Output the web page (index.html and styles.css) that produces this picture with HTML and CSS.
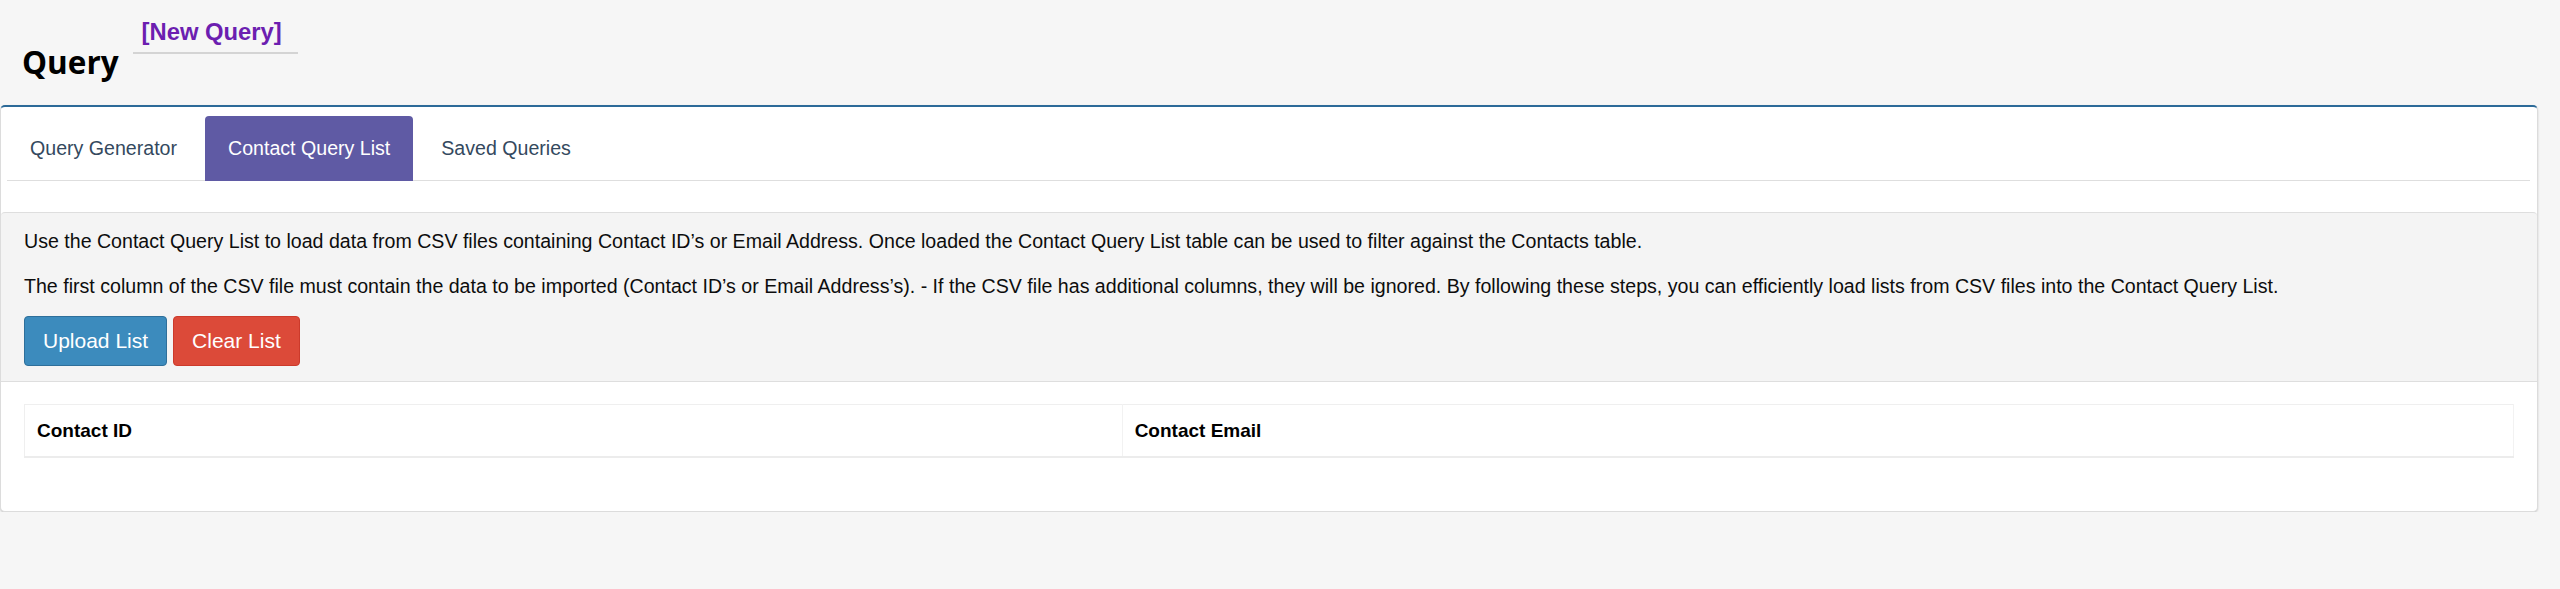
FILE: index.html
```html
<!DOCTYPE html>
<html>
<head>
    <meta charset="utf-8">
    <title>Query</title>
    <link rel="stylesheet" href="styles.css">
</head>
<body>
    <div class="page-header">
        <h1>Query</h1>
        <a href="#" class="new-query">[New Query]</a>
    </div>

    <div class="box">
        <div class="tab-strip">
            <ul class="tabs">
                <li class="tab">Query Generator</li>
                <li class="tab active">Contact Query List</li>
                <li class="tab">Saved Queries</li>
            </ul>
        </div>

        <div class="info">
            <p>Use the Contact Query List to load data from CSV files containing Contact ID’s or Email Address. Once loaded the Contact Query List table can be used to filter against the Contacts table.</p>
            <p>The first column of the CSV file must contain the data to be imported (Contact ID’s or Email Address’s). - If the CSV file has additional columns, they will be ignored. By following these steps, you can efficiently load lists from CSV files into the Contact Query List.</p>
            <div class="actions">
                <button class="btn btn-upload">Upload List</button>
                <button class="btn btn-clear">Clear List</button>
            </div>
        </div>

        <div class="table-wrap">
            <table class="list-table">
                <thead>
                    <tr>
                        <th class="col-id">Contact ID</th>
                        <th>Contact Email</th>
                    </tr>
                </thead>
                <tbody></tbody>
            </table>
        </div>
    </div>
</body>
</html>
```

FILE: styles.css
```css
body {
    margin: 0;
    background-color: #f6f6f6;
    font-family: 'Liberation Sans', Arial, sans-serif;
    color: #111;
}

.page-header {
    display: flex;
    align-items: flex-start;
    height: 105px;
    padding-left: 22px;
}

.page-header h1 {
    font-family: 'Open Sans', 'Noto Sans', sans-serif;
    font-weight: 700;
    font-size: 31.5px;
    line-height: 40px;
    margin: 42px 0 0 0;
    color: #000;
}

.new-query {
    display: inline-block;
    margin: 19px 0 0 14px;
    padding: 0 16px 7px 9px;
    font-size: 23.8px;
    line-height: 26px;
    font-weight: 700;
    color: #6c1eb0;
    text-decoration: none;
    border-bottom: 2px solid #d4d4d4;
}

.box {
    margin-right: 22px;
    background-color: #fff;
    border: 1px solid #dcdcdc;
    border-top: 2px solid #2c6a98;
    border-radius: 5px;
    box-shadow: 0 1px 2px rgba(0, 0, 0, 0.18);
    padding-bottom: 53px;
}

.tab-strip {
    padding: 9px 7px 0 6px;
}

.tabs {
    display: flex;
    gap: 5px;
    list-style: none;
    margin: 0;
    padding: 0;
    border-bottom: 1px solid #dedede;
}

.tab {
    height: 65px;
    margin-bottom: -1px;
    padding: 0 23px;
    display: flex;
    align-items: center;
    font-size: 19.6px;
    color: #34495e;
    border-radius: 4px 4px 0 0;
}

.tab.active {
    background-color: #5f5aa4;
    color: #fff;
}

.info {
    margin-top: 31px;
    background-color: #f4f4f4;
    border-top: 1px solid #dedede;
    border-bottom: 1px solid #dedede;
    border-radius: 4px 4px 0 0;
    padding: 16px 23px 15px 23px;
}

.info p {
    margin: 0 0 20px 0;
    font-size: 19.6px;
    line-height: 25px;
    color: #0d0d0d;
}

.info p + p {
    margin-bottom: 17px;
}

.actions {
    display: flex;
    gap: 6px;
}

.btn {
    height: 50px;
    padding: 0 18px;
    font-family: inherit;
    font-size: 21px;
    color: #fff;
    border-radius: 4px;
    border: 1px solid transparent;
}

.btn-upload {
    background-color: #3c8bbd;
    border-color: #2e6f9a;
}

.btn-clear {
    background-color: #dc4a39;
    border-color: #cc3a2b;
}

.table-wrap {
    padding: 22px 23px 0 23px;
}

.list-table {
    width: 100%;
    border-collapse: collapse;
    border: 1px solid #efefef;
}

.list-table th {
    height: 51px;
    padding: 0 12px;
    text-align: left;
    font-size: 19px;
    font-weight: 700;
    color: #000;
    border-bottom: 2px solid #ececec;
    border-right: 1px solid #f2f2f2;
}

.list-table .col-id {
    width: 44.1%;
}
```
